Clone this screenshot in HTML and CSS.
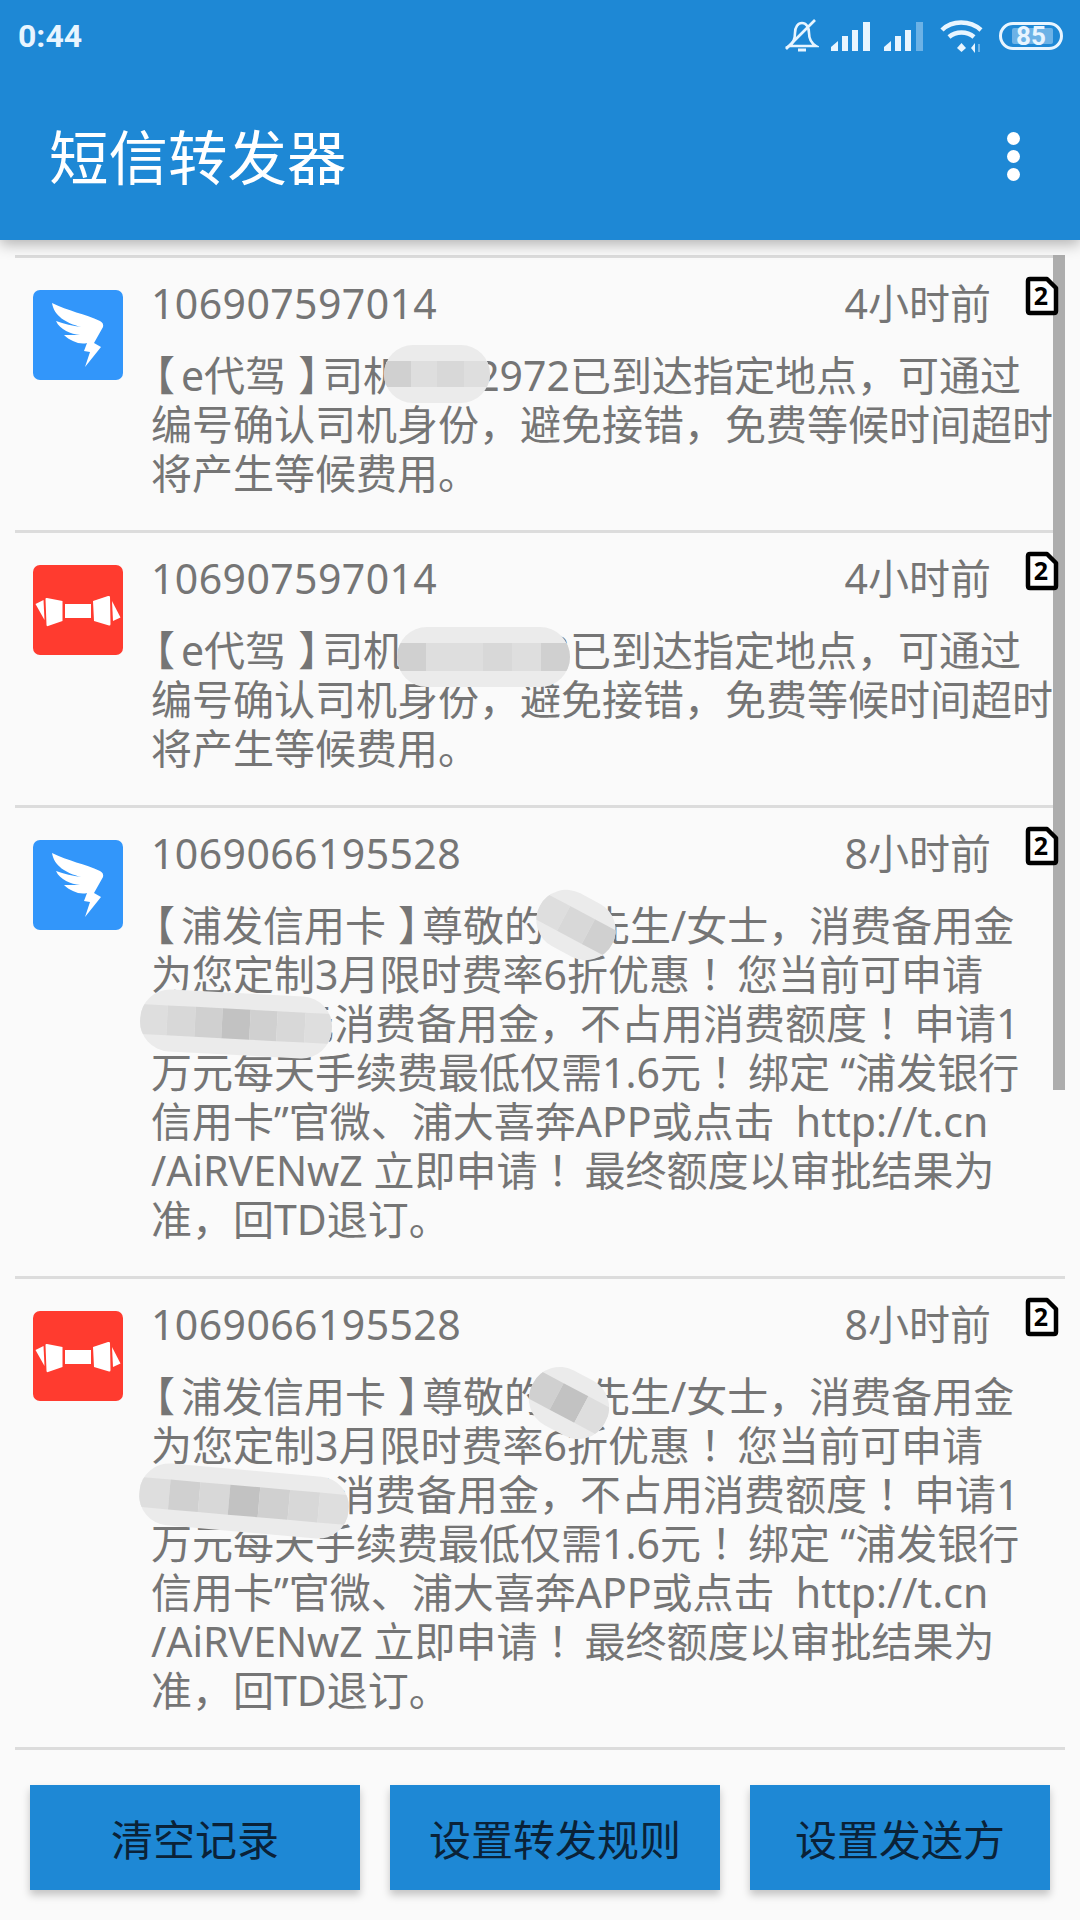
FILE: index.html
```html
<!DOCTYPE html>
<html lang="zh-CN">
<head>
  <meta charset="UTF-8">
  <meta name="viewport" content="width=device-width, initial-scale=1.0">
  <title>短信转发器</title>
  <link rel="stylesheet" href="styles.css">
</head>
<body>
  <div class="app">
    <header class="topbar">
      <div class="status">
        <span class="clock">0:44</span>
        <div class="status-icons">
          <!-- muted bell -->
          <svg width="34" height="34" viewBox="0 0 34 34" fill="none" stroke="#e8f5ff" stroke-width="2.6">
            <path d="M4 27 C9 24 10 20 10 14 C10 8 13 4 17 4 C21 4 24 8 24 14 C24 20 26 24 31 27 Z"/>
            <path d="M13 31 H21" stroke-width="3"/>
            <path d="M1 30 L30 1"/>
          </svg>
          <!-- signal bars -->
          <svg width="41" height="30" viewBox="0 0 41 30" fill="#e8f5ff">
            <path d="M0 30 V26 L7 20 V30 Z"/>
            <rect x="11" y="15" width="6" height="15"/>
            <rect x="21" y="9" width="6" height="21"/>
            <rect x="32" y="1" width="7" height="29"/>
          </svg>
          <svg width="41" height="30" viewBox="0 0 41 30" fill="#e8f5ff">
            <path d="M0 30 V26 L7 20 V30 Z"/>
            <rect x="11" y="15" width="6" height="15"/>
            <rect x="21" y="9" width="6" height="21"/>
            <rect x="32" y="1" width="7" height="29" fill="#6cb2e6"/>
          </svg>
          <!-- wifi -->
          <svg class="wifi" width="44" height="34" viewBox="0 0 44 34" fill="none" stroke="#e8f5ff" stroke-width="4.500">
            <path d="M2 11 C12 1 30 1 41 11"/>
            <path d="M9 18 C16 12 27 12 34 18"/>
            <path d="M17 29 L21.500 24 L26 29 L21.500 33 Z" fill="#e8f5ff" stroke="none"/>
            <path d="M35 24 V34 L31 29 Z" fill="#e8f5ff" stroke="none"/>
            <path d="M39 25 V33" stroke="#6cb2e6" stroke-width="2"/>
          </svg>
          <div class="battery"><span class="battery-fill"></span><span class="battery-num">85</span></div>
        </div>
      </div>
      <div class="toolbar">
        <h1>短信转发器</h1>
        <div class="overflow-menu"><i></i><i></i><i></i></div>
      </div>
    </header>

    <div class="list">
      <div class="scrollbar"></div>

      <div class="item">
        <div class="app-icon blue">
          <svg width="90" height="90" viewBox="0 0 90 90"><use href="#wing"/></svg>
        </div>
        <div class="item-body">
          <div class="item-head">
            <span class="sender">106907597014</span>
            <span class="when">4小时前</span>
          </div>
          <p class="msg"><span class="br-l">【</span>e代驾<span class="br-r">】</span>司机<span class="gap gap-a"></span>2972已到达指定地点，可通过<br>编号确认司机身份，避免接错，免费等候时间超时<br>将产生等候费用。</p>
        </div>
        <svg class="sim" width="34" height="40" viewBox="0 0 34 40"><use href="#simcard"/><text x="16" y="29" class="sim-num">2</text></svg>
        <div class="smudge sm-a"><i class="s2"></i><i class="s1"></i><i class="s3"></i><i class="s1"></i></div>
      </div>

      <div class="item">
        <div class="app-icon red">
          <svg width="90" height="90" viewBox="0 0 90 90"><use href="#bow"/></svg>
        </div>
        <div class="item-body">
          <div class="item-head">
            <span class="sender">106907597014</span>
            <span class="when">4小时前</span>
          </div>
          <p class="msg"><span class="br-l">【</span>e代驾<span class="br-r">】</span>司机<span class="gap gap-a"></span>2972已到达指定地点，可通过<br>编号确认司机身份，避免接错，免费等候时间超时<br>将产生等候费用。</p>
        </div>
        <svg class="sim" width="34" height="40" viewBox="0 0 34 40"><use href="#simcard"/><text x="16" y="29" class="sim-num">2</text></svg>
        <div class="smudge sm-b"><i class="s2"></i><i class="s1"></i><i class="s1"></i><i class="s3"></i><i class="s1"></i><i class="s2"></i></div>
      </div>

      <div class="item">
        <div class="app-icon blue">
          <svg width="90" height="90" viewBox="0 0 90 90"><use href="#wing"/></svg>
        </div>
        <div class="item-body">
          <div class="item-head">
            <span class="sender">1069066195528</span>
            <span class="when">8小时前</span>
          </div>
          <p class="msg"><span class="br-l">【</span>浦发信用卡<span class="br-r">】</span>尊敬的<span class="gap gap-b"></span>先生/女士，消费备用金<br>为您定制3月限时费率6折优惠<span class="bang">！</span>您当前可申请<br><span class="gap gap-c"></span>元消费备用金，不占用消费额度<span class="bang">！</span>申请1<br>万元每天手续费最低仅需1.6元<span class="bang">！</span>绑定 “浦发银行<br>信用卡”官微、浦大喜奔APP或点击&nbsp; http://t.cn<br>/AiRVENwZ 立即申请<span class="bang">！</span>最终额度以审批结果为<br>准，回TD退订。</p>
        </div>
        <svg class="sim" width="34" height="40" viewBox="0 0 34 40"><use href="#simcard"/><text x="16" y="29" class="sim-num">2</text></svg>
        <div class="smudge sm-c"><i class="s1"></i><i class="s3"></i><i class="s2"></i></div>
        <div class="smudge sm-d"><i class="s1"></i><i class="s3"></i><i class="s2"></i><i class="s4"></i><i class="s2"></i><i class="s3"></i><i class="s1"></i></div>
      </div>

      <div class="item">
        <div class="app-icon red">
          <svg width="90" height="90" viewBox="0 0 90 90"><use href="#bow"/></svg>
        </div>
        <div class="item-body">
          <div class="item-head">
            <span class="sender">1069066195528</span>
            <span class="when">8小时前</span>
          </div>
          <p class="msg"><span class="br-l">【</span>浦发信用卡<span class="br-r">】</span>尊敬的<span class="gap gap-b"></span>先生/女士，消费备用金<br>为您定制3月限时费率6折优惠<span class="bang">！</span>您当前可申请<br><span class="gap gap-c"></span>元消费备用金，不占用消费额度<span class="bang">！</span>申请1<br>万元每天手续费最低仅需1.6元<span class="bang">！</span>绑定 “浦发银行<br>信用卡”官微、浦大喜奔APP或点击&nbsp; http://t.cn<br>/AiRVENwZ 立即申请<span class="bang">！</span>最终额度以审批结果为<br>准，回TD退订。</p>
        </div>
        <svg class="sim" width="34" height="40" viewBox="0 0 34 40"><use href="#simcard"/><text x="16" y="29" class="sim-num">2</text></svg>
        <div class="smudge sm-e"><i class="s2"></i><i class="s4"></i><i class="s1"></i></div>
        <div class="smudge sm-f"><i class="s1"></i><i class="s2"></i><i class="s3"></i><i class="s4"></i><i class="s2"></i><i class="s3"></i><i class="s1"></i></div>
      </div>
    </div>

    <div class="actions">
      <button class="btn btn-a">清空记录</button>
      <button class="btn btn-a">设置转发规则</button>
      <button class="btn btn-b">设置发送方</button>
    </div>
  </div>

  <!-- shared shapes for the list rows -->
  <svg class="defs" width="0" height="0">
    <defs>
      <path id="wing" fill="#fff" d="M19 13 C35 21 52 24 67 31 Q71 33 70 37 L61 53 L68 57 L52 77 L57 62 L51 61 L54 53 C47 55 37 51 31 45 L47 45 C38 44 27 40 23 31 C31 34 40 36 48 37 C33 33 21 26 19 13 Z"/>
      <g id="bow" fill="#fff">
        <path d="M2.500 39 L10.500 35 L11.500 55 Z"/>
        <path d="M12.500 34 Q12.500 32.500 14 33 L29.500 36 L29.500 56 L15 61 Q13.500 61.500 13.500 60 Z"/>
        <rect x="32" y="39" width="26" height="14"/>
        <path d="M60 36 L75 31 Q77 30.500 77 32 L77.500 59 Q77.500 61 76 60.500 L61 56 Z"/>
        <path d="M79 36 L87.500 52.500 L80 56 Z"/>
      </g>
      <path id="simcard" d="M3 5 Q3 3 5 3 L22 3 L31 12 L31 35 Q31 37 29 37 L5 37 Q3 37 3 35 Z" fill="#fff" stroke="#000" stroke-width="4.500" stroke-linejoin="round"/>
    </defs>
  </svg>
</body>
</html>
```

FILE: styles.css
```css
/* General Styles */
* {
  box-sizing: border-box;
}

body {
  margin: 0;
  font-family: "Noto Sans", "Noto Sans CJK SC", sans-serif;
  background-color: #fafafa;
}

.app {
  width: 1080px;
  height: 1920px;
  display: flex;
  flex-direction: column;
  overflow: hidden;
}

/* Top Bar */
.topbar {
  height: 240px;
  background-color: #1e88d5;
  box-shadow: 0 4px 14px rgba(0, 0, 0, 0.3);
  position: relative;
  z-index: 2;
}

.status {
  height: 72px;
  padding: 0 17px 0 18px;
  display: flex;
  align-items: center;
  justify-content: space-between;
}

.clock {
  font-family: Roboto, sans-serif;
  font-weight: 700;
  font-size: 32px;
  color: #e8f5ff;
}

.status-icons {
  display: flex;
  align-items: center;
  gap: 12px;
}

.wifi {
  margin-left: 3px;
}

.battery {
  width: 64px;
  height: 28px;
  border: 3px solid #e8f5ff;
  border-radius: 14px;
  position: relative;
  margin-left: 3px;
  font-family: Roboto, sans-serif;
  font-weight: 700;
  font-size: 26px;
  color: #e8f5ff;
  display: flex;
  align-items: center;
  justify-content: center;
}

.battery-fill {
  position: absolute;
  left: 10px;
  top: 3px;
  bottom: 3px;
  width: 41px;
  background-color: #6cb2e6;
  border-radius: 2px;
}

.battery-num {
  position: relative;
}

.toolbar {
  height: 168px;
  padding: 0 60px 0 49px;
  display: flex;
  align-items: center;
  justify-content: space-between;
}

.toolbar h1 {
  margin: 0 0 4px;
  font-size: 59.500px;
  font-weight: 400;
  color: #fff;
}

.overflow-menu {
  display: flex;
  flex-direction: column;
  gap: 5px;
}

.overflow-menu i {
  display: block;
  width: 13px;
  height: 13px;
  border-radius: 50%;
  background-color: #fff;
}

/* Message List */
.list {
  flex: 1;
  margin: 15px 15px 0;
  position: relative;
}

.scrollbar {
  position: absolute;
  top: 0;
  right: 0;
  width: 12px;
  height: 835px;
  background-color: #adadad;
  z-index: 1;
}

.item {
  border-top: 3px solid #dcdcdc;
  position: relative;
  display: flex;
  padding: 29px 0 32px 18px;
}

.item:last-of-type {
  border-bottom: 3px solid #dcdcdc;
}

.app-icon {
  width: 90px;
  height: 90px;
  border-radius: 7px;
  flex: none;
  margin-top: 3px;
}

.app-icon svg {
  display: block;
}

.blue {
  background-color: #3296fa;
}

.red {
  background-color: #ff3b2f;
}

.item-body {
  margin-left: 28px;
  flex: 1;
  min-width: 0;
  color: #757575;
}

.item-head {
  display: flex;
  justify-content: space-between;
  padding-right: 74px;
  height: 44px;
  line-height: 44px;
  font-size: 41px;
  margin-top: -6px;
}

.sender {
  letter-spacing: 0.4px;
}

.msg {
  margin: 26px 0 0;
  font-size: 41px;
  line-height: 49px;
  white-space: nowrap;
}

/* the brackets sit tighter than a full em */
.br-l {
  margin-left: -17px;
  letter-spacing: 6px;
}

.br-r {
  margin-left: 12px;
  letter-spacing: -17px;
}

.bang {
  margin-left: 10px;
  letter-spacing: -4px;
}

.gap {
  display: inline-block;
}

.gap-a {
  width: 72px;
}

.gap-b {
  width: 44px;
}

.gap-c {
  width: 142px;
}

.sim {
  position: absolute;
  top: 18px;
  right: 6px;
  z-index: 2;
}

.sim-num {
  font-family: "Noto Sans", sans-serif;
  font-size: 25px;
  font-weight: 700;
  text-anchor: middle;
  fill: #000;
}

.defs {
  position: absolute;
}

/* Blurred-out parts of the messages */
.smudge {
  position: absolute;
  display: flex;
  overflow: hidden;
  border-radius: 30px;
  background-color: #ebebeb;
  padding: 16px 0;
}

.smudge i {
  flex: 1;
  display: block;
}

.s1 {
  background-color: #dedede;
}

.s2 {
  background-color: #d0d0d0;
}

.s3 {
  background-color: #d8d8d8;
}

.s4 {
  background-color: #c2c2c2;
}

.sm-a {
  left: 369px;
  top: 87px;
  width: 106px;
  height: 58px;
}

.sm-b {
  left: 382px;
  top: 94px;
  width: 173px;
  height: 60px;
}

.sm-c {
  left: 520px;
  top: 87px;
  width: 82px;
  height: 60px;
  transform: rotate(28deg);
}

.sm-d {
  left: 125px;
  top: 185px;
  width: 192px;
  height: 62px;
  transform: rotate(3deg);
}

.sm-e {
  left: 513px;
  top: 93px;
  width: 82px;
  height: 62px;
  transform: rotate(28deg);
}

.sm-f {
  left: 124px;
  top: 191px;
  width: 210px;
  height: 62px;
  transform: rotate(5deg);
}

/* Button Styles */
.actions {
  display: flex;
  padding: 0 30px 30px;
  gap: 30px;
}

.btn {
  height: 105px;
  border: none;
  background-color: #1e88d5;
  color: #0a2238;
  font-family: "Noto Sans CJK SC", sans-serif;
  font-size: 42px;
  box-shadow: 0 5px 8px rgba(0, 0, 0, 0.22);
  padding: 0;
}

.btn-a {
  width: 330px;
}

.btn-b {
  width: 300px;
}
```
